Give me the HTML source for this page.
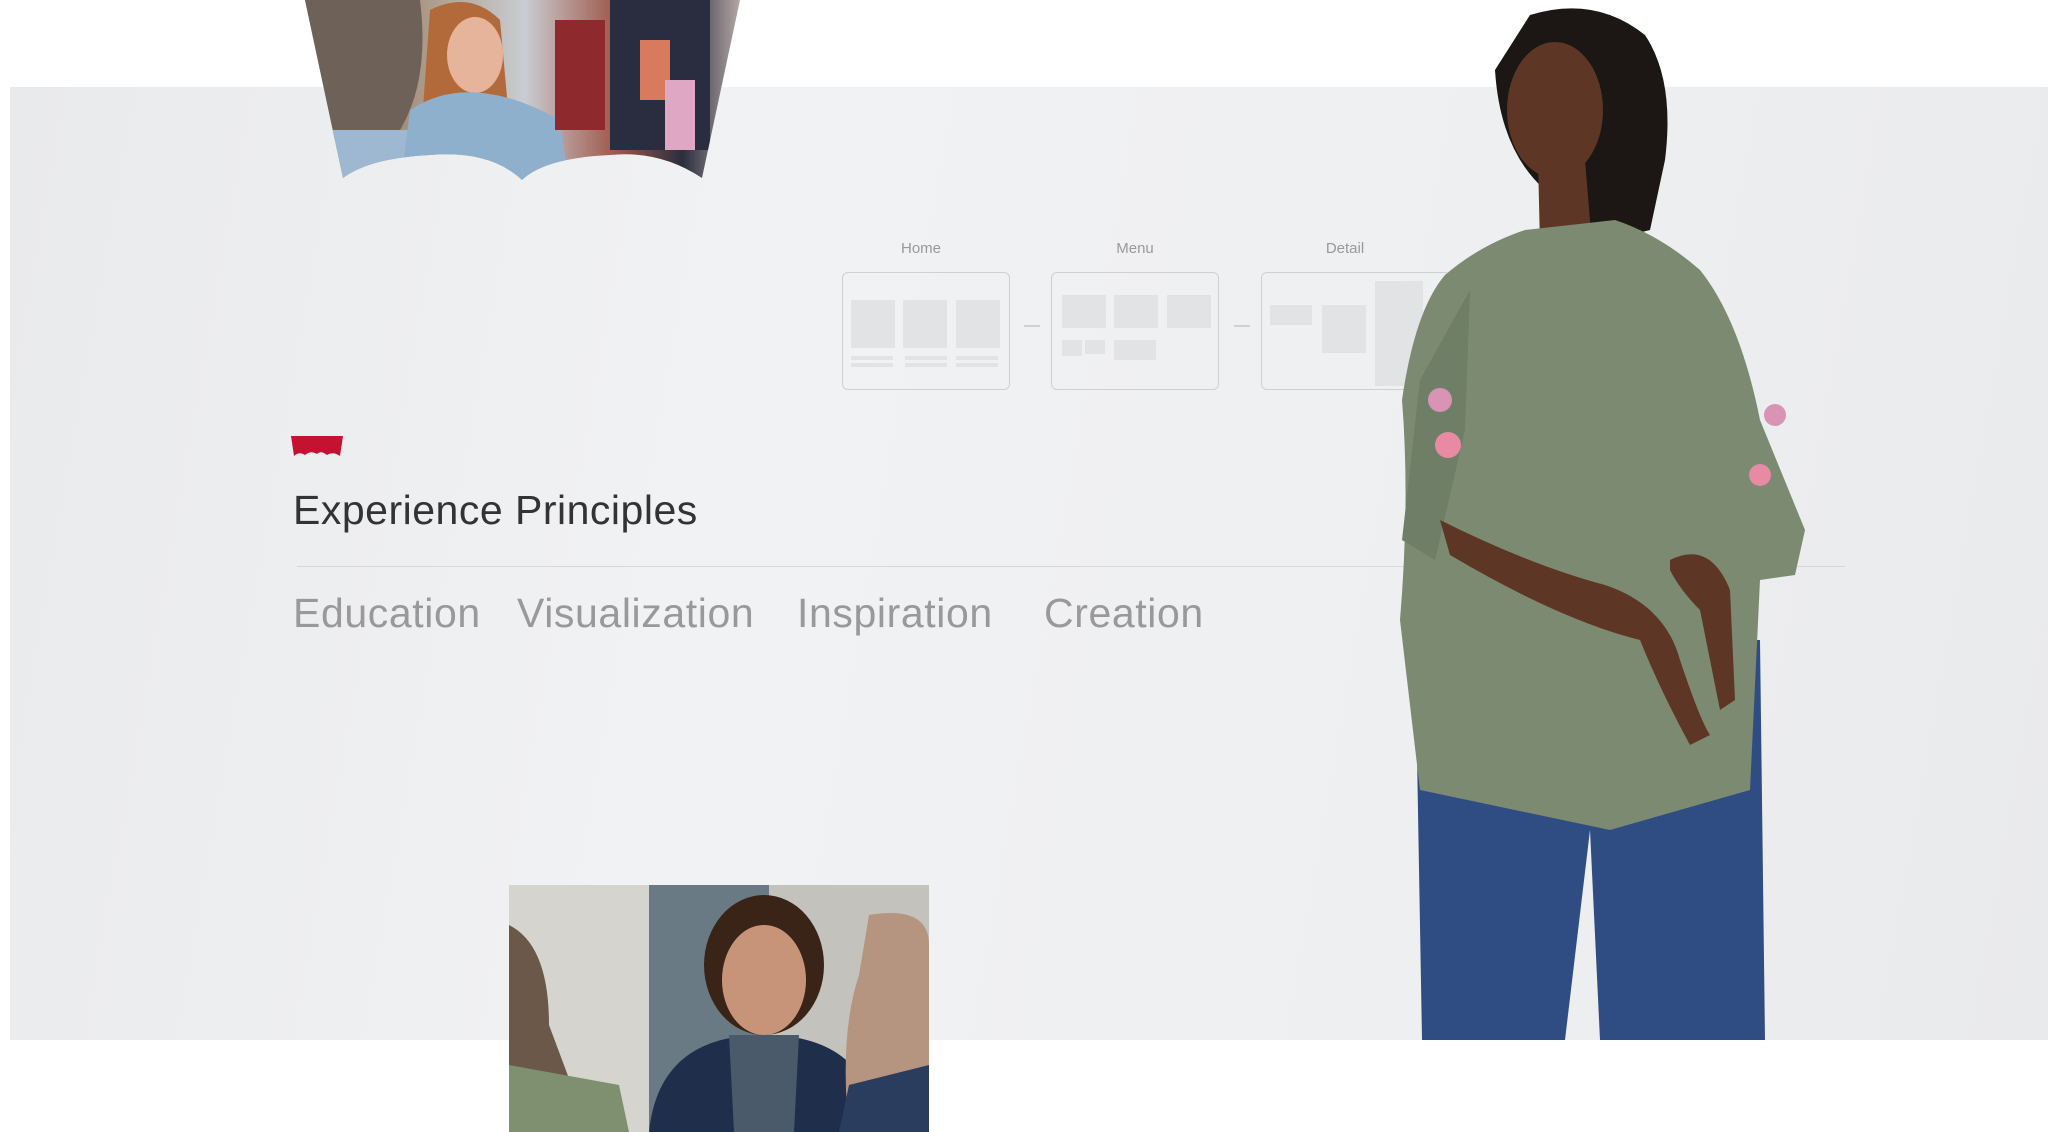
<!DOCTYPE html>
<html><head><meta charset="utf-8"><style>
html,body{margin:0;padding:0}
body{width:2048px;height:1132px;position:relative;overflow:hidden;background:#fff;font-family:"Liberation Sans",sans-serif}
.band{position:absolute;left:10px;top:87px;width:2038px;height:953px;background:linear-gradient(100deg,#e9eaec 0%,#f1f2f4 35%,#eeeff1 70%,#e9eaec 100%)}
.lbl{position:absolute;top:240px;font-size:15px;color:#999;width:168px;text-align:center}
.box{position:absolute;top:272px;width:168px;height:118px;border:1.5px solid #cfd0d3;border-radius:6px;box-sizing:border-box}
.g{position:absolute;background:#e2e3e5}
.dash{position:absolute;top:325px;width:16px;height:1.5px;background:#cfd0d3}
h1{position:absolute;left:293px;top:487px;margin:0;font-weight:normal;font-size:41px;color:#333;letter-spacing:0.5px}
.rule{position:absolute;left:297px;top:566px;width:1548px;height:1px;background:#d6d7da}
.nav{position:absolute;top:590px;font-size:41px;color:#999;letter-spacing:0.6px}
</style></head><body>
<div class="band"></div>

<!-- top photo -->
<svg style="position:absolute;left:0;top:0" width="760" height="190">
<defs><clipPath id="c1"><path d="M305 0 L740 0 L702 178 Q660 150 610 155 Q545 158 522 180 Q490 150 430 155 Q370 158 343 178 Z"/></clipPath>
<linearGradient id="bg1" x1="0" x2="1"><stop offset="0" stop-color="#6b5d55"/><stop offset="0.25" stop-color="#a8937f"/><stop offset="0.5" stop-color="#c9cdd2"/><stop offset="0.7" stop-color="#a0584a"/><stop offset="0.85" stop-color="#2b2d3e"/><stop offset="1" stop-color="#cbbdb6"/></linearGradient></defs>
<g clip-path="url(#c1)">
<rect x="300" y="0" width="450" height="190" fill="url(#bg1)"/>
<path d="M300 0 L420 0 Q430 80 400 130 L330 140 L300 190Z" fill="#6e6158"/>
<rect x="330" y="130" width="110" height="60" fill="#9db8d0"/>
<path d="M430 10 Q470 -10 500 20 L510 130 L420 150 Z" fill="#b36a3a"/>
<ellipse cx="475" cy="55" rx="28" ry="38" fill="#e6b39b"/>
<path d="M410 110 Q470 70 560 120 L570 190 L400 190Z" fill="#8fb0cc"/>
<rect x="555" y="20" width="50" height="110" fill="#8e2a2e"/>
<rect x="610" y="0" width="100" height="150" fill="#2a2c40"/>
<rect x="640" y="40" width="30" height="60" fill="#d77a5d"/>
<rect x="665" y="80" width="30" height="70" fill="#e0a7c4"/>
</g></svg>

<!-- wireframes -->
<div class="lbl" style="left:837px">Home</div>
<div class="lbl" style="left:1051px">Menu</div>
<div class="lbl" style="left:1261px">Detail</div>
<div class="box" style="left:842px">
 <div class="g" style="left:8px;top:27px;width:44px;height:48px"></div><div class="g" style="left:60px;top:27px;width:44px;height:48px"></div><div class="g" style="left:113px;top:27px;width:44px;height:48px"></div>
 <div class="g" style="left:8px;top:83px;width:42px;height:4px"></div><div class="g" style="left:62px;top:83px;width:42px;height:4px"></div><div class="g" style="left:113px;top:83px;width:42px;height:4px"></div>
 <div class="g" style="left:8px;top:90px;width:42px;height:4px"></div><div class="g" style="left:62px;top:90px;width:42px;height:4px"></div><div class="g" style="left:113px;top:90px;width:42px;height:4px"></div>
</div>
<div class="dash" style="left:1024px"></div>
<div class="box" style="left:1051px">
 <div class="g" style="left:10px;top:22px;width:44px;height:33px"></div><div class="g" style="left:62px;top:22px;width:44px;height:33px"></div><div class="g" style="left:115px;top:22px;width:44px;height:33px"></div>
 <div class="g" style="left:10px;top:67px;width:20px;height:16px"></div><div class="g" style="left:33px;top:67px;width:20px;height:14px"></div><div class="g" style="left:62px;top:67px;width:42px;height:20px"></div>
</div>
<div class="dash" style="left:1234px"></div>
<div class="box" style="left:1261px;width:190px">
 <div class="g" style="left:8px;top:32px;width:42px;height:20px"></div><div class="g" style="left:60px;top:32px;width:44px;height:48px"></div><div class="g" style="left:113px;top:8px;width:48px;height:105px"></div>
</div>

<!-- logo -->
<svg style="position:absolute;left:291px;top:436px" width="52" height="22"><path d="M0 0 H52 L49 20 Q42 15 36 19 Q30 14 26 18 Q20 14 14 19 Q8 15 3 20 Z" fill="#c41230"/></svg>

<h1>Experience Principles</h1>
<div class="rule"></div>
<div class="nav" style="left:293px">Education</div>
<div class="nav" style="left:517px">Visualization</div>
<div class="nav" style="left:797px">Inspiration</div>
<div class="nav" style="left:1044px">Creation</div>

<!-- woman -->
<svg style="position:absolute;left:1360px;top:0" width="460" height="1045">
<path d="M170 15 Q235 -5 285 35 Q315 80 305 160 L290 230 L230 245 L185 190 Q140 150 135 70 Z" fill="#1c1714"/>
<ellipse cx="195" cy="110" rx="48" ry="68" fill="#5e3626"/>
<path d="M178 160 L225 160 L232 245 L180 245Z" fill="#5e3626"/>
<path d="M170 255 L255 250 L250 300 L185 300Z" fill="#f2f2f0"/>
<path d="M62 1040 L55 640 L400 640 L405 1040 L240 1040 L230 830 L205 1040Z" fill="#2f4d82"/>
<path d="M165 230 L255 220 Q300 235 340 270 Q380 320 400 420 L445 530 L435 575 L400 580 L390 790 L250 830 L60 790 L40 620 Q50 500 42 400 Q55 310 85 275 Q120 245 165 230Z" fill="#7b8a71"/>
<path d="M110 290 L60 380 L42 540 L75 560 L105 430Z" fill="#6f7e66"/>
<path d="M310 560 Q350 540 370 590 L375 700 L360 710 L340 610 Q320 590 310 570Z" fill="#5e3626"/>
<path d="M80 520 Q170 565 245 585 Q305 605 320 660 Q340 720 350 735 L330 745 Q300 690 280 640 Q200 620 90 555Z" fill="#5e3626"/>
<circle cx="80" cy="400" r="12" fill="#d994b5"/><circle cx="88" cy="445" r="13" fill="#e88aa4"/><circle cx="415" cy="415" r="11" fill="#d994b5"/><circle cx="400" cy="475" r="11" fill="#e88aa4"/>
</svg>

<!-- bottom photo -->
<svg style="position:absolute;left:509px;top:885px" width="420" height="247">
<rect width="420" height="247" fill="#c4c2bc"/>
<rect x="140" y="0" width="120" height="247" fill="#6a7a84"/>
<rect x="0" y="0" width="140" height="247" fill="#d6d4cf"/>
<path d="M0 40 Q40 60 40 140 L80 247 L0 247Z" fill="#6b5848"/>
<path d="M0 180 L110 200 L120 247 L0 247Z" fill="#7f9070"/>
<ellipse cx="255" cy="80" rx="60" ry="70" fill="#3a2418"/>
<ellipse cx="255" cy="95" rx="42" ry="55" fill="#c89479"/>
<path d="M140 247 Q150 150 255 150 Q360 150 370 247Z" fill="#1f2e4a"/>
<path d="M220 150 L290 150 L285 247 L225 247Z" fill="#4a5a6a"/>
<path d="M360 30 Q420 20 420 60 L420 247 L340 247 Q330 150 350 90Z" fill="#b59580"/>
<path d="M340 200 L420 180 L420 247 L330 247Z" fill="#2a3d5f"/>
</svg>
</body></html>
